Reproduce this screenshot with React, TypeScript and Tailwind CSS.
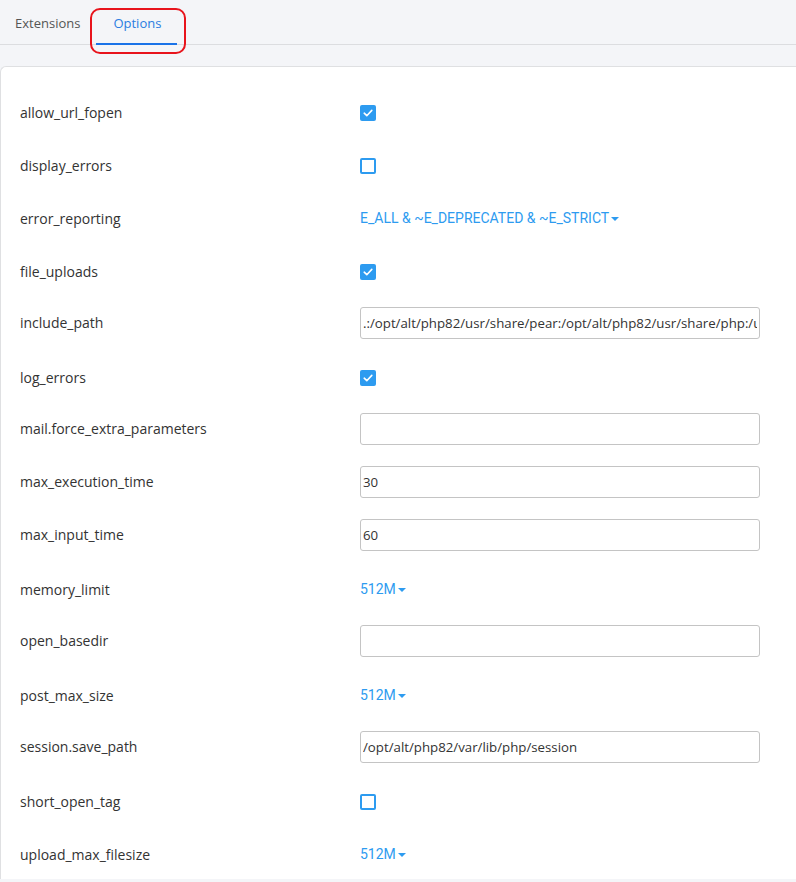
import { useState } from 'react';

type Row =
  | { name: string; kind: 'check'; value: boolean }
  | { name: string; kind: 'select'; value: string }
  | { name: string; kind: 'input'; value: string };

const ROWS: Row[] = [
  { name: 'allow_url_fopen', kind: 'check', value: true },
  { name: 'display_errors', kind: 'check', value: false },
  { name: 'error_reporting', kind: 'select', value: 'E_ALL & ~E_DEPRECATED & ~E_STRICT' },
  { name: 'file_uploads', kind: 'check', value: true },
  {
    name: 'include_path',
    kind: 'input',
    value: '.:/opt/alt/php82/usr/share/pear:/opt/alt/php82/usr/share/php:/usr/share/pear:/usr/share/php',
  },
  { name: 'log_errors', kind: 'check', value: true },
  { name: 'mail.force_extra_parameters', kind: 'input', value: '' },
  { name: 'max_execution_time', kind: 'input', value: '30' },
  { name: 'max_input_time', kind: 'input', value: '60' },
  { name: 'memory_limit', kind: 'select', value: '512M' },
  { name: 'open_basedir', kind: 'input', value: '' },
  { name: 'post_max_size', kind: 'select', value: '512M' },
  { name: 'session.save_path', kind: 'input', value: '/opt/alt/php82/var/lib/php/session' },
  { name: 'short_open_tag', kind: 'check', value: false },
  { name: 'upload_max_filesize', kind: 'select', value: '512M' },
];

function Checkbox({ checked }: { checked: boolean }) {
  if (checked) {
    return (
      <span className="flex h-4 w-4 items-center justify-center rounded-[2px] bg-[#2d9bf0]">
        <svg width="12" height="12" viewBox="0 0 12 12" fill="none">
          <path d="M2.2 6.2 4.8 8.7 9.8 3.4" stroke="#fff" strokeWidth="1.6" strokeLinecap="round" strokeLinejoin="round" />
        </svg>
      </span>
    );
  }
  return <span className="block h-4 w-4 rounded-[2px] border-2 border-[#2d9bf0] bg-white" />;
}

function Control({ row }: { row: Row }) {
  if (row.kind === 'check') return <Checkbox checked={row.value} />;
  if (row.kind === 'select') {
    return (
      <span className="flex items-center font-['Roboto',sans-serif] text-[14px] text-[#2d9bf0]">
        {row.value}
        <svg width="10" height="6" viewBox="0 0 10 6" className="ml-[1px]">
          <path d="M1 1h8L5 5z" fill="#2d9bf0" />
        </svg>
      </span>
    );
  }
  return (
    <input
      readOnly
      value={row.value}
      className="h-8 w-[400px] rounded-[3px] border border-[#c4c4c4] bg-white px-[2px] text-[13.25px] text-[#333] outline-none"
    />
  );
}

export default function App() {
  const [tab] = useState('options');

  return (
    <div className="min-h-[882px] bg-[#f4f5f8] font-['Open_Sans',sans-serif]">
      <div className="flex h-[45px] border-b border-[#dcdde0]">
        <div className="flex items-center px-[15px] pt-[3px] text-[13px] text-[#555]">Extensions</div>
        <div className="relative flex items-center px-[18px] pt-[3px] text-[13px] text-[#2a7de1]">
          Options
          {tab === 'options' && (
            <span className="absolute bottom-[-1px] left-[1px] right-[2px] h-[2px] bg-[#1a73e8]" />
          )}
          <span className="pointer-events-none absolute left-[-5px] top-[8px] h-[46px] w-[96px] rounded-[10px] border-2 border-[#e8141c]" />
        </div>
      </div>
      <div className="mt-[21px] rounded-tl-[6px] border-l border-t border-[#dfe0e2] bg-white pt-[17px]">
        {ROWS.map((row) => (
          <div
            key={row.name}
            className={`flex h-[53px] items-center ${row.kind === 'input' ? '' : 'pt-[4px]'}`}
          >
            <div className="w-[359px] pl-[19px] text-[14px] text-[#333]">{row.name}</div>
            <div className="flex items-center">
              <Control row={row} />
            </div>
          </div>
        ))}
      </div>
    </div>
  );
}
